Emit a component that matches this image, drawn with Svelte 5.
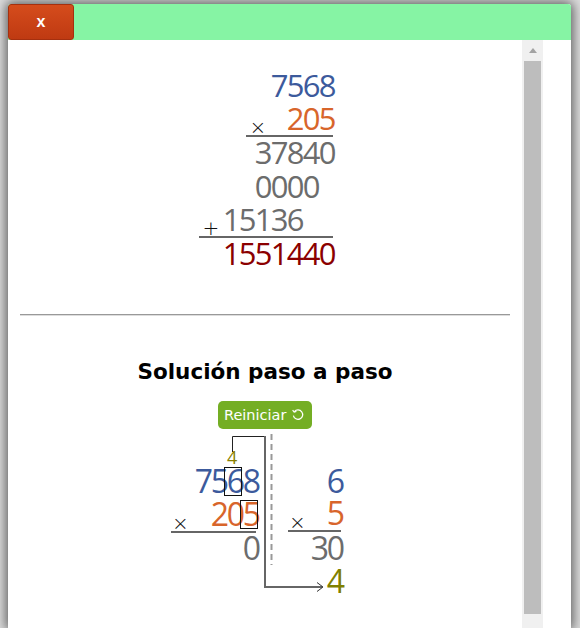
<script lang="ts">
    const topRows = [
        { digits: "7568", color: "blue", shift: 0 },
        { digits: "205", color: "orange", shift: 0, op: "×", ruled: 87 },
        { digits: "37840", color: "gray", shift: 0 },
        { digits: "0000", color: "gray", shift: 16 },
        { digits: "15136", color: "gray", shift: 32, op: "+", ruled: 134 },
        { digits: "1551440", color: "red", shift: 0 },
    ];
</script>

{#snippet num(text: string, color: string, mark = -1)}
    <span class="num {color}">
        {#each text.split("") as d, i}
            <span class="digit" class:marked={i === mark}>{d}</span>
        {/each}
    </span>
{/snippet}

<div class="modal">
    <header class="bar">
        <button class="close">x</button>
    </header>
    <div class="body">
        <main class="content">
            <section class="stack">
                {#each topRows as row}
                    <div
                        class="row"
                        class:ruled={row.ruled}
                        style="padding-right: {row.shift}px; width: {row.ruled ? row.ruled + 'px' : 'auto'}"
                    >
                        {#if row.op}<span class="op">{row.op}</span>{/if}
                        {@render num(row.digits, row.color)}
                    </div>
                {/each}
            </section>

            <hr />

            <h2>Solución paso a paso</h2>
            <button class="restart">
                Reiniciar
                <svg width="14" height="14" viewBox="0 0 14 14" fill="none" stroke="currentColor" stroke-width="1.2">
                    <path d="M3.4 3.6A4.7 4.7 0 1 1 2.4 7.6" />
                    <path d="M1.6 2.2 L3.2 4 L5.4 3.4" />
                </svg>
            </button>

            <section class="steps">
                <svg class="wires" width="200" height="170" viewBox="0 0 200 170" fill="none">
                    <path d="M66.5 20V4.5H99" stroke="#222" />
                    <path d="M99 4V155H156" stroke="#666" stroke-width="2" />
                    <path d="M151 150.5L157 155L151 159.5" stroke="#333" />
                    <path d="M105.5 2V133" stroke="#999" stroke-width="2" stroke-dasharray="6 4" />
                </svg>
                <div class="col left">
                    <div class="carry"><span>4</span></div>
                    <div class="line">{@render num("7568", "blue", 2)}</div>
                    <div class="line rule">
                        <span class="op">×</span>
                        {@render num("205", "orange", 2)}
                    </div>
                    <div class="line">{@render num("0", "gray")}</div>
                </div>
                <div class="col right">
                    <div class="carry"></div>
                    <div class="line">{@render num("6", "blue")}</div>
                    <div class="line rule">
                        <span class="op">×</span>
                        {@render num("5", "orange")}
                    </div>
                    <div class="line">{@render num("30", "gray")}</div>
                    <div class="line">{@render num("4", "olive")}</div>
                </div>
            </section>
        </main>
        <div class="scrollbar">
            <span class="arrow"></span>
            <span class="thumb"></span>
        </div>
    </div>
</div>

<style>
    :global(body) {
        margin: 0;
        background: #ddd;
        overflow: hidden;
    }

    .modal {
        width: 563px;
        height: 624px;
        margin: 4px 0 0 8px;
        background: #fff;
        border-radius: 3px 3px 0 0;
        box-shadow: 0 0 12px 2px rgba(0, 0, 0, 0.6);
        display: flex;
        flex-direction: column;
        font-family: "DejaVu Sans", sans-serif;
    }

    .bar {
        height: 36px;
        flex: none;
        background: #86f4a4;
        border-radius: 3px 3px 0 0;
    }

    .close {
        display: block;
        width: 66px;
        height: 36px;
        padding: 0;
        border: 1px solid #a5300f;
        border-radius: 3px;
        background: linear-gradient(#d54c1c, #bf3a12);
        color: #fff;
        font: bold 16px "Liberation Sans", sans-serif;
    }

    .body {
        flex: 1;
        display: flex;
        padding-right: 28px;
        min-height: 0;
    }

    .content {
        flex: 1;
        min-width: 0;
    }

    .scrollbar {
        flex: none;
        width: 21px;
        display: flex;
        flex-direction: column;
        align-items: center;
        background: #f0f0f0;
    }

    .arrow {
        margin-top: 8px;
        border: 4.5px solid transparent;
        border-top: none;
        border-bottom: 5px solid #a3a3a3;
    }

    .thumb {
        width: 17px;
        height: 553px;
        margin-top: 8px;
        background: #bdbdbd;
    }

    .stack {
        width: 141px;
        margin: 29px auto 0;
        display: flex;
        flex-direction: column;
        align-items: flex-end;
    }

    .row {
        height: 33.6px;
        display: flex;
        justify-content: flex-end;
        align-items: center;
    }

    .row.ruled {
        height: 34.6px;
        margin-bottom: -1px;
    }

    .row.ruled .op {
        padding-left: 4px;
    }

    .row.ruled,
    .line.rule {
        border-bottom: 2px solid #666;
        box-sizing: border-box;
        justify-content: space-between;
        margin-right: 3px;
    }

    .row.ruled .num,
    .line.rule .num {
        margin-right: -3px;
    }

    .left .line.rule {
        margin-right: 4px;
    }

    .left .line.rule .num {
        margin-right: -4px;
    }

    .op {
        font: 300 20px/1 "DejaVu Sans", sans-serif;
        color: #111;
        align-self: flex-end;
        padding-left: 1px;
        margin-bottom: -2px;
    }

    .num {
        display: flex;
        font: 400 31px/1 "Open Sans", sans-serif;
    }

    .col .num {
        font-size: 32px;
        margin-top: -2px;
    }

    .digit {
        width: 16px;
        display: flex;
        justify-content: center;
        position: relative;
    }

    .marked::after {
        content: "";
        position: absolute;
        left: -4px;
        top: 2px;
        width: 16px;
        height: 27px;
        border: 1px solid #111;
    }

    .blue { color: #3c5a9c; }
    .orange { color: #d8652b; }
    .gray { color: #6c6c6c; }
    .red { color: #8b0000; }
    .olive { color: #808000; }

    hr {
        margin: 43px 12px 0;
        border: none;
        border-top: 1px solid #999;
        border-bottom: 1px solid #ddd;
    }

    h2 {
        margin: 44px 0 0;
        text-align: center;
        font-size: 21.5px;
        line-height: 24px;
        color: #000;
    }

    .restart {
        display: flex;
        align-items: center;
        gap: 5px;
        height: 28px;
        width: 94px;
        box-sizing: border-box;
        margin: 17px auto 0;
        padding: 0 0 0 6px;
        border: none;
        border-radius: 5px;
        background: #74ae24;
        color: #fff;
        font: 14.5px "DejaVu Sans", sans-serif;
    }

    .steps {
        position: relative;
        display: flex;
        gap: 28px;
        width: 173px;
        margin-left: 163px;
        height: 170px;
    }

    .wires {
        position: absolute;
        left: -5px;
        top: 3px;
    }

    .col {
        display: flex;
        flex-direction: column;
        align-items: stretch;
    }

    .left { width: 89px; }
    .right { width: 56px; }

    .carry {
        height: 37px;
        display: flex;
        align-items: flex-end;
        font: 18px/1 "Open Sans", sans-serif;
        color: #8a7f00;
        padding-left: 56px;
    }

    .line {
        height: 33.5px;
        display: flex;
        justify-content: flex-end;
        align-items: center;
    }
</style>
